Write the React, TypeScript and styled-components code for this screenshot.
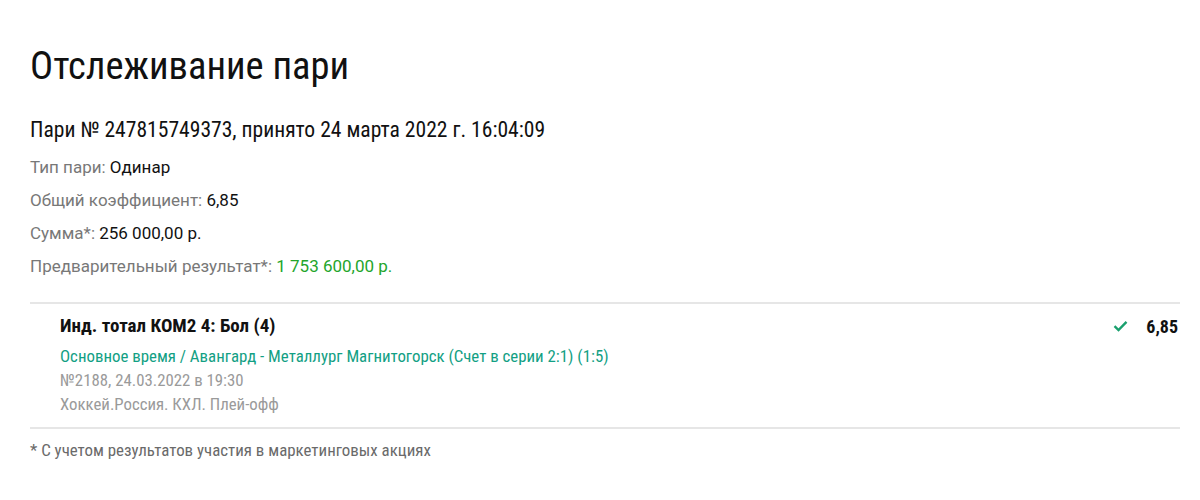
import styled, { createGlobalStyle } from "styled-components";

const GlobalStyle = createGlobalStyle`
  html, body {
    margin: 0;
    padding: 0;
    background: #fff;
  }
  body {
    font-family: "Roboto Condensed", "Liberation Sans Narrow", Roboto, sans-serif;
    color: #111;
  }
`;

const Page = styled.div`
  width: 1200px;
  height: 500px;
  box-sizing: border-box;
  padding: 44px 20px 0 30px;
`;

const Title = styled.h1`
  margin: 0;
  font-size: 38.5px;
  font-weight: 400;
  line-height: 44px;
`;

const Subtitle = styled.div`
  margin-top: 30px;
  font-size: 21.6px;
  line-height: 24px;
`;

const InfoList = styled.div`
  margin-top: 9px;
  display: flex;
  flex-direction: column;
`;

const InfoRow = styled.div`
  font-family: Roboto, "Liberation Sans", sans-serif;
  font-size: 17px;
  line-height: 33px;
  color: #787878;
`;

const Value = styled.span<{ $green?: boolean }>`
  color: ${(p) => (p.$green ? "#23a52b" : "#111")};
`;

const Bet = styled.div`
  margin-top: 19px;
  border-top: 2px solid #e6e6e6;
  border-bottom: 2px solid #e6e6e6;
  padding: 10px 2px 11px 30px;
  display: flex;
  justify-content: space-between;
`;

const BetInfo = styled.div`
  display: flex;
  flex-direction: column;
`;

const BetName = styled.div`
  font-size: 19px;
  font-weight: 700;
  line-height: 24px;
  margin-bottom: 7px;
`;

const EventLine = styled.div`
  font-size: 16.85px;
  line-height: 23px;
  color: #12a084;
`;

const MetaLine = styled.div`
  font-size: 16.8px;
  line-height: 24px;
  color: #9a9a9a;
`;

const Odds = styled.div`
  display: flex;
  align-items: center;
  gap: 18px;
  height: 24px;
  font-size: 18px;
  font-weight: 700;
`;

const Footnote = styled.div`
  margin-top: 11px;
  font-size: 16.9px;
  line-height: 20px;
  color: #6a6a6a;
`;

const Check = () => (
  <svg width="15" height="12" viewBox="0 0 15 12" fill="none">
    <path d="M1.5 6.2 L5.5 10 L13.5 1.8" stroke="#1aa06e" strokeWidth="2.4" />
  </svg>
);

export default function App() {
  return (
    <Page>
      <GlobalStyle />
      <Title>Отслеживание пари</Title>
      <Subtitle>Пари № 247815749373, принято 24 марта 2022 г. 16:04:09</Subtitle>
      <InfoList>
        <InfoRow>
          Тип пари: <Value>Одинар</Value>
        </InfoRow>
        <InfoRow>
          Общий коэффициент: <Value>6,85</Value>
        </InfoRow>
        <InfoRow>
          Сумма*: <Value>256 000,00 р.</Value>
        </InfoRow>
        <InfoRow>
          Предварительный результат*: <Value $green>1 753 600,00 р.</Value>
        </InfoRow>
      </InfoList>
      <Bet>
        <BetInfo>
          <BetName>Инд. тотал КОМ2 4: Бол (4)</BetName>
          <EventLine>
            Основное время / Авангард - Металлург Магнитогорск (Счет в серии 2:1) (1:5)
          </EventLine>
          <MetaLine>№2188, 24.03.2022 в 19:30</MetaLine>
          <MetaLine>Хоккей.Россия. КХЛ. Плей-офф</MetaLine>
        </BetInfo>
        <Odds>
          <Check />
          6,85
        </Odds>
      </Bet>
      <Footnote>* С учетом результатов участия в маркетинговых акциях</Footnote>
    </Page>
  );
}
